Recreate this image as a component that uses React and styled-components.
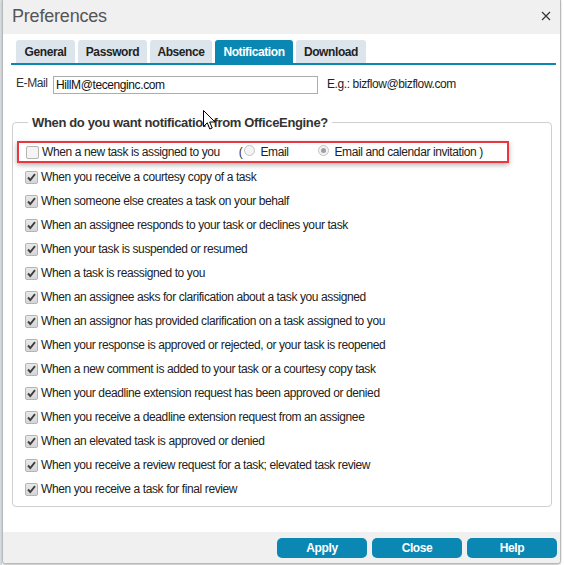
import React from 'react'
import styled, { createGlobalStyle } from 'styled-components'

const GlobalStyle = createGlobalStyle`
  body {
    margin: 0;
    background: #ffffff;
    font-family: "Liberation Sans", Arial, sans-serif;
    font-size: 12px;
    letter-spacing: -0.4px;
    color: #222;
  }
`

const Page = styled.div`
  padding-left: 2px;
  width: 564px;
  height: 565px;
  box-sizing: border-box;
  position: relative;
  background: linear-gradient(to right, #d8dde2 0, #d8dde2 2px, #fff 2px);
`

const Dialog = styled.div`
  width: 559px;
  height: 564px;
  box-sizing: border-box;
  border: 1px solid #b9b9b9;
  border-top: none;
  border-radius: 0 0 4px 4px;
  background: #fff;
  display: flex;
  flex-direction: column;
  overflow: hidden;
  box-shadow: 0 1px 2px rgba(0, 0, 0, 0.25);
`

const Header = styled.div`
  height: 34px;
  background: #f0f0f0;
  display: flex;
  align-items: center;
  justify-content: space-between;
  padding: 0 9px 0 9px;
  flex-shrink: 0;
`

const Title = styled.div`
  font-size: 18px;
  letter-spacing: -0.2px;
  color: #555;
  padding-bottom: 1px;
`

const CloseBtn = styled.div`
  width: 11px;
  height: 11px;
  display: flex;
  align-items: center;
  justify-content: center;
  margin-top: -2px;
`

const TabBar = styled.div`
  display: flex;
  gap: 3px;
  margin: 6px 4px 0 8px;
  padding-left: 5px;
  border-bottom: 2px solid #0b87b3;
`

const Tab = styled.div`
  height: 23px;
  width: ${p => p.w}px;
  box-sizing: border-box;
  display: flex;
  align-items: center;
  justify-content: center;
  border-radius: 3px 3px 0 0;
  font-weight: bold;
  font-size: 12px;
  background: ${p => (p.active ? '#0b87b3' : '#dce5ec')};
  color: ${p => (p.active ? '#fff' : '#222')};
`

const Body = styled.div`
  flex: 1;
  padding: 0 8px 0 9px;
`

const EmailRow = styled.div`
  display: flex;
  align-items: flex-start;
  margin-top: 11px;
  padding-left: 4px;
`

const Label = styled.div`
  color: #333;
  line-height: 14px;
  width: 37px;
`

const Input = styled.div`
  width: 265px;
  height: 18px;
  box-sizing: border-box;
  border: 1px solid #adadad;
  padding-left: 2px;
  line-height: 16px;
  color: #111;
`

const Hint = styled.div`
  margin-left: 9px;
  line-height: 16px;
  color: #222;
`

const Frame = styled.fieldset`
  margin: 21px 0 0 0;
  padding: 11px 0 5px 4px;
  border: 1px solid #cfcfcf;
  border-radius: 4px;
  min-width: 0;
`

const Legend = styled.legend`
  margin-left: 11px;
  padding: 0 4px;
  font-size: 13px;
  font-weight: bold;
  letter-spacing: -0.35px;
  color: #333;
  line-height: 15px;
`

const Row = styled.div`
  height: 24px;
  display: flex;
  align-items: center;
  padding-left: 8px;
  box-sizing: border-box;
`

const HighlightRow = styled.div`
  height: 22px;
  margin-bottom: 2px;
  width: 492px;
  box-sizing: border-box;
  display: flex;
  align-items: center;
  padding-left: 7px;
  border: 2px solid #e8373f;
  box-shadow: 0 2px 5px rgba(0, 0, 0, 0.3);
`

const Box = styled.span`
  width: 13px;
  height: 13px;
  box-sizing: border-box;
  border: 1px solid #b4b4b4;
  border-radius: 2px;
  background: ${p => (p.checked ? 'linear-gradient(#e9e9e9, #d6d6d6)' : '#f4f4f4')};
  display: flex;
  align-items: center;
  justify-content: center;
  flex-shrink: 0;
`

const Text = styled.span`
  margin-left: 3px;
  color: #222;
  white-space: nowrap;
`

const Paren = styled.span`
  margin-left: 19px;
  color: #333;
`

const Radio = styled.span`
  width: 11px;
  height: 11px;
  box-sizing: border-box;
  border-radius: 50%;
  border: 1px solid #c4c4c4;
  background: #f3f3f3;
  display: inline-flex;
  align-items: center;
  justify-content: center;
  margin-left: ${p => p.gap}px;
  margin-right: 2px;
  margin-top: -3px;
  &::after {
    content: '';
    width: 5px;
    height: 5px;
    border-radius: 50%;
    background: ${p => (p.checked ? '#a0a0a0' : 'transparent')};
  }
`

const Footer = styled.div`
  height: 31px;
  background: #f0f0f0;
  display: flex;
  justify-content: flex-end;
  align-items: flex-start;
  gap: 5px;
  padding: 6px 3px 0 0;
  box-sizing: border-box;
  flex-shrink: 0;
`

const Button = styled.div`
  width: 90px;
  height: 20px;
  border-radius: 5px;
  background: #0b87b3;
  color: #fff;
  font-weight: bold;
  font-size: 12px;
  display: flex;
  align-items: center;
  justify-content: center;
`

const Cursor = styled.svg`
  position: absolute;
  left: 203px;
  top: 110px;
`

const Check = () => (
  <svg width="9" height="9" viewBox="0 0 9 9">
    <path d="M1 4.5 L3.3 7 L8 1.2" fill="none" stroke="#3f3f3f" strokeWidth="1.9" />
  </svg>
)

const tabs = [
  ['General', 59],
  ['Password', 69],
  ['Absence', 62],
  ['Notification', 78],
  ['Download', 70],
]

const options = [
  'When you receive a courtesy copy of a task',
  'When someone else creates a task on your behalf',
  'When an assignee responds to your task or declines your task',
  'When your task is suspended or resumed',
  'When a task is reassigned to you',
  'When an assignee asks for clarification about a task you assigned',
  'When an assignor has provided clarification on a task assigned to you',
  'When your response is approved or rejected, or your task is reopened',
  'When a new comment is added to your task or a courtesy copy task',
  'When your deadline extension request has been approved or denied',
  'When you receive a deadline extension request from an assignee',
  'When an elevated task is approved or denied',
  'When you receive a review request for a task; elevated task review',
  'When you receive a task for final review',
]

const App = () => (
  <Page>
    <GlobalStyle />
    <Dialog>
      <Header>
        <Title>Preferences</Title>
        <CloseBtn>
          <svg width="10" height="10" viewBox="0 0 10 10">
            <path d="M1 1 L9 9 M9 1 L1 9" stroke="#333" strokeWidth="1.2" />
          </svg>
        </CloseBtn>
      </Header>
      <TabBar>
        {tabs.map(([name, w]) => (
          <Tab key={name} w={w} active={name === 'Notification'}>
            {name}
          </Tab>
        ))}
      </TabBar>
      <Body>
        <EmailRow>
          <Label>E-Mail</Label>
          <Input>HillM@tecenginc.com</Input>
          <Hint>E.g.: bizflow@bizflow.com</Hint>
        </EmailRow>
        <Frame>
          <Legend>When do you want notification from OfficeEngine?</Legend>
          <HighlightRow>
            <Box />
            <Text>When a new task is assigned to you</Text>
            <Paren>(</Paren>
            <Radio gap={2} />
            <Text>Email</Text>
            <Radio gap={30} checked />
            <Text>Email and calendar invitation )</Text>
          </HighlightRow>
          {options.map(text => (
            <Row key={text}>
              <Box checked>
                <Check />
              </Box>
              <Text>{text}</Text>
            </Row>
          ))}
        </Frame>
      </Body>
      <Footer>
        <Button>Apply</Button>
        <Button>Close</Button>
        <Button>Help</Button>
      </Footer>
    </Dialog>
    <Cursor width="13" height="21" viewBox="0 0 13 21">
      <path
        d="M0.5 0.5 L0.5 16.5 L4.3 12.8 L6.8 19 L9.2 18 L6.7 12 L12 12 Z"
        fill="#fff"
        stroke="#000"
        strokeWidth="1"
        strokeLinejoin="round"
      />
    </Cursor>
  </Page>
)

export default App
